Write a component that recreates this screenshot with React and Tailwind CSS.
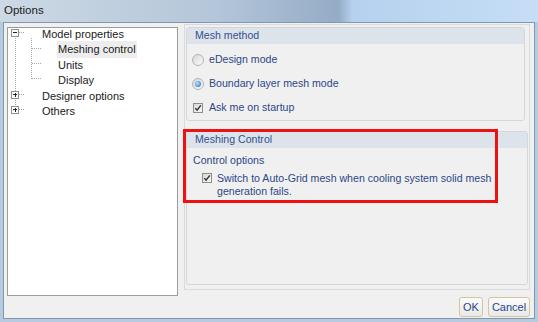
import React from 'react'

const font = { fontFamily: '"Liberation Sans", Arial, sans-serif' }

const tree = [
  { label: 'Model properties', level: 0 },
  { label: 'Meshing control', level: 1, selected: true },
  { label: 'Units', level: 1 },
  { label: 'Display', level: 1 },
  { label: 'Designer options', level: 0 },
  { label: 'Others', level: 0 },
]

function Radio({ checked }) {
  return (
    <span className="flex h-[12px] w-[12px] shrink-0 items-center justify-center rounded-full border border-[#b4b4b4] bg-[linear-gradient(135deg,#d6d6d6,#fbfbfb)]">
      {checked && <span className="h-[6px] w-[6px] rounded-full bg-[radial-gradient(circle_at_40%_40%,#c4e6ff,#2c84d2_75%)]" />}
    </span>
  )
}

function Check() {
  return (
    <span className="flex h-[10px] w-[10px] shrink-0 items-center justify-center border border-[#8e8e8e] bg-[linear-gradient(135deg,#d8d8d8,#f7f7f7)]">
      <svg width="8" height="8" viewBox="0 0 8 8">
        <path d="M1.3 4.1 L3.1 6.2 L6.8 1.3" fill="none" stroke="#2f2f2f" strokeWidth="1.4" />
      </svg>
    </span>
  )
}

function Expander({ y, open }) {
  return (
    <g>
      <rect x="3.5" y={y - 3.5} width="7" height="7" fill="#fafafa" stroke="#919191" />
      <line x1="5" y1={y} x2="9" y2={y} stroke="#222" />
      {!open && <line x1="7" y1={y - 2} x2="7" y2={y + 2} stroke="#222" />}
      <line x1="11" y1={y} x2="16" y2={y} stroke="#a6a6a6" strokeDasharray="1 1" />
    </g>
  )
}

function TreeLines() {
  return (
    <svg className="absolute left-0 top-0" width="60" height="100" shapeRendering="crispEdges">
      <line x1="7.5" y1="10" x2="7.5" y2="80" stroke="#a6a6a6" strokeDasharray="1 1" />
      <line x1="23.5" y1="12" x2="23.5" y2="53" stroke="#a6a6a6" strokeDasharray="1 1" />
      <line x1="24" y1="22.5" x2="34" y2="22.5" stroke="#a6a6a6" strokeDasharray="1 1" />
      <line x1="24" y1="37.5" x2="34" y2="37.5" stroke="#a6a6a6" strokeDasharray="1 1" />
      <line x1="24" y1="52.5" x2="34" y2="52.5" stroke="#a6a6a6" strokeDasharray="1 1" />
      <Expander y={6.5} open />
      <Expander y={68.5} />
      <Expander y={83.5} />
    </svg>
  )
}

export default function App() {
  return (
    <div className="relative flex h-[322px] w-[538px] flex-col bg-[#b6cbe0]" style={font}>
      {/* Title bar */}
      <div className="flex h-[22px] shrink-0 items-center bg-[linear-gradient(90deg,#cdd9e5_0%,#b4c6d9_40%,#95acc6_63%,#b6d1ee_65.5%,#c6def6_100%)] px-[4px] text-[11.5px] text-[#1b1b1b]">
        Options
      </div>

      {/* Body */}
      <div className="mx-[3px] mb-[3px] flex flex-1 flex-col border border-[#8197b0] bg-[#f0f0f0]">
        <div className="flex">
          {/* Tree */}
          <div className="ml-[3px] mt-[4px] h-[269px] w-[171px] border border-[#9c9c9c] bg-white">
            <div className="relative h-full text-[11px] text-[#1a1a1a]">
              <TreeLines />
              <div className="-mt-[1.75px] flex flex-col">
                {tree.map(item => (
                  <div key={item.label} className={`flex h-[15.5px] items-center ${item.level ? 'pl-[50px]' : 'pl-[34px]'}`}>
                    <span className={item.selected ? 'bg-[#ededed] px-[1px] -ml-[1px]' : ''}>{item.label}</span>
                  </div>
                ))}
              </div>
            </div>
          </div>

          {/* Right panel */}
          <div className="ml-[6px] mt-[1px] h-[266px] w-[346px] border border-[#dadada] text-[10.6px] text-[#2c4786]">
            {/* Mesh method */}
            <div className="ml-[1px] mt-[2px] w-[339px] rounded-[3px] border border-[#d3d7dd]">
              <div className="flex h-[16px] items-center bg-[#dde3eb] pl-[8px] text-[#33508c]">Mesh method</div>
              <div className="mt-[4px] flex flex-col">
                <div className="flex h-[24px] items-center gap-[5px] pl-[5px]">
                  <Radio />
                  <span>eDesign mode</span>
                </div>
                <div className="flex h-[24px] items-center gap-[5px] pl-[5px]">
                  <Radio checked />
                  <span>Boundary layer mesh mode</span>
                </div>
                <div className="flex h-[24px] items-center gap-[6px] pl-[6px]">
                  <Check />
                  <span>Ask me on startup</span>
                </div>
              </div>
            </div>

            {/* Meshing Control */}
            <div className="ml-[1px] mt-[10px] h-[154px] w-[342px] rounded-[3px] border border-[#d3d7dd]">
              <div className="flex h-[16px] items-center bg-[#dde3eb] pl-[8px] text-[#33508c]">Meshing Control</div>
              <div className="mt-[6px] flex h-[14px] items-center pl-[6px]">Control options</div>
              <div className="mt-[3.5px] flex items-start gap-[5px] pl-[15px]">
                <span className="mt-[1.5px]"><Check /></span>
                <span className="leading-[13px]">
                  Switch to Auto-Grid mesh when cooling system solid mesh
                  <br />
                  generation fails.
                </span>
              </div>
            </div>
          </div>
        </div>

        {/* Buttons */}
        <div className="mr-[4px] mt-[1px] flex justify-end gap-[5px] text-[11px] text-[#2c4786]">
          <button className="flex h-[20px] w-[24px] items-center justify-center rounded-[3px] border border-[#d4c59f] bg-[linear-gradient(#fbfbfb,#e9e9e9)]">OK</button>
          <button className="flex h-[20px] w-[42px] items-center justify-center rounded-[3px] border border-[#d4c59f] bg-[linear-gradient(#fbfbfb,#e9e9e9)]">Cancel</button>
        </div>
      </div>

      {/* Annotation */}
      <div className="pointer-events-none absolute left-[183px] top-[129px] h-[74px] w-[315px] border-[3px] border-[#ee1111]" />
    </div>
  )
}
